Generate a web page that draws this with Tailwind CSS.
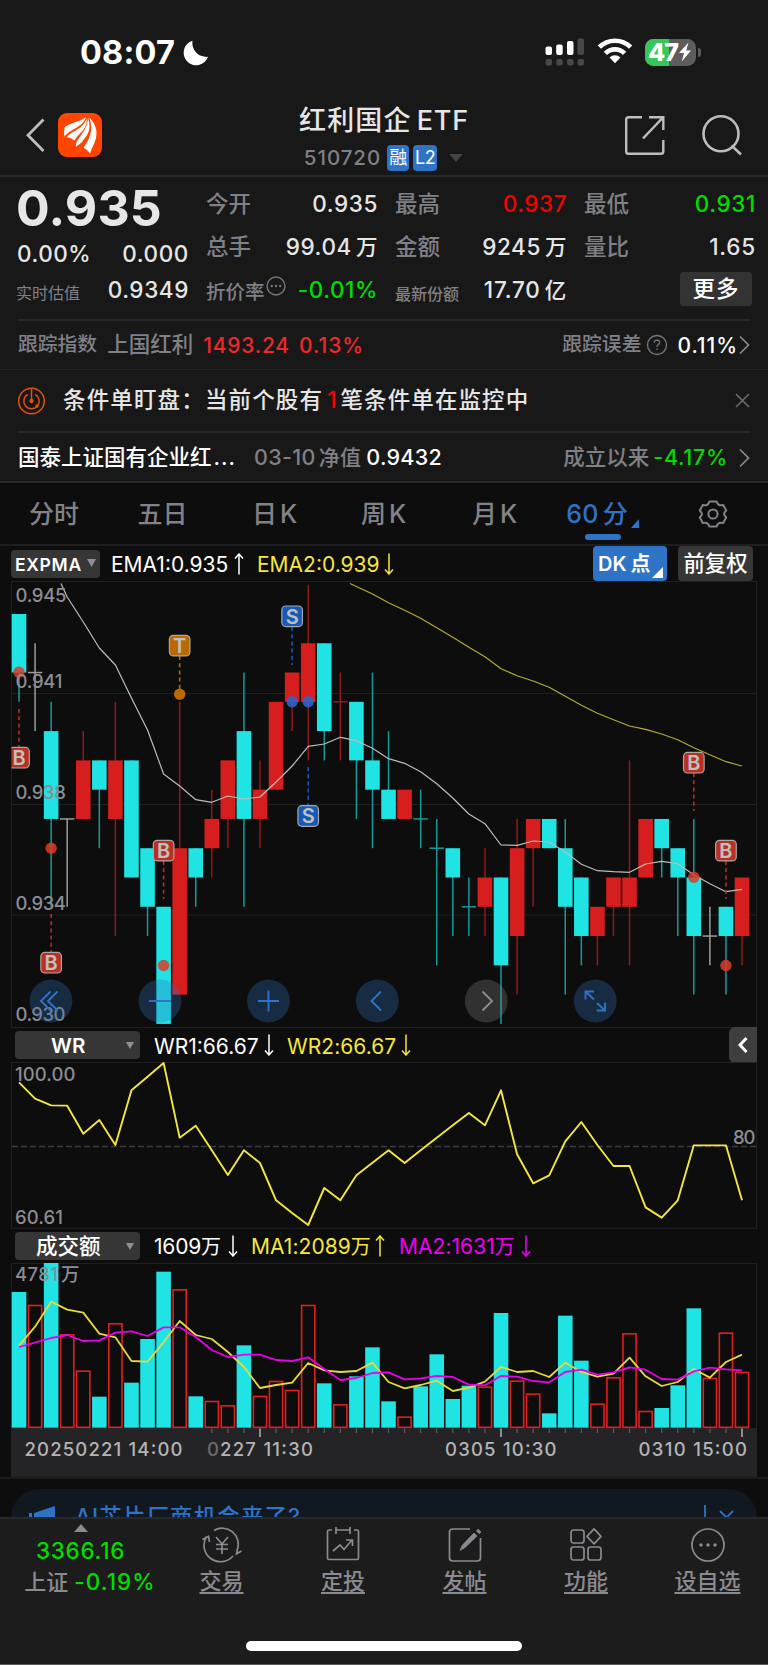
<!DOCTYPE html>
<html lang="zh-CN">
<head>
<meta charset="utf-8">
<title>红利国企ETF 510720</title>
<script src="https://cdn.jsdelivr.net/npm/@tailwindcss/browser@4"></script>
</head>
<body class="w-[768px] h-[1665px] overflow-hidden bg-[#0d0d0d] text-[#e6e6e6] font-['Inter','Noto_Sans_CJK_SC',sans-serif] leading-none whitespace-nowrap flex flex-col">

<div class="bg-[#181818] h-[483px] shrink-0 flex flex-col border-b-2 border-[#29292b]">
  <!-- status bar -->
  <div class="h-[88px] shrink-0 flex items-start justify-between pl-[80px] pr-[67px] pt-[36px] text-white">
    <div class="flex items-center gap-[8px] h-[32px]">
      <span class="text-[32.500px] font-bold tracking-[0.200px] mt-[2px]">08:07</span>
      <svg width="26" height="26" viewBox="0 0 26 26" class="mt-px"><path d="M9.500 .8A12.500 12.500 0 1 0 25 16.800 14 14 0 0 1 9.500 .8Z" fill="#fff"/></svg>
    </div>
    <div class="flex items-center h-[32px]">
      <svg width="40" height="28" viewBox="0 0 40 28"><g fill="#fff"><rect x="0.5" y="8.5" width="6.5" height="8.5" rx="2"/><rect x="11.2" y="6.5" width="6.5" height="10.5" rx="2"/><rect x="22" y="3" width="6.5" height="14" rx="2"/></g><g fill="#484848"><rect x="32.5" y="0.5" width="6.5" height="16.5" rx="2"/><rect x="0.5" y="21" width="6.5" height="6.5" rx="2"/><rect x="11.2" y="21" width="6.5" height="6.5" rx="2"/><rect x="22" y="21" width="6.5" height="6.5" rx="2"/><rect x="32.5" y="21" width="6.5" height="6.5" rx="2"/></g></svg>
      <svg width="36" height="26" viewBox="0 0 36 26" class="ml-[12px] -mt-[2px]"><g fill="none" stroke="#fff" stroke-width="4.6"><path d="M2.4 9.2A22 22 0 0 1 33.6 9.2"/><path d="M8.4 15.4A13.5 13.5 0 0 1 27.6 15.4"/></g><path d="M12.5 19.5A8 8 0 0 1 23.5 19.5L18 25.2Z" fill="#fff"/></svg>
      <div class="ml-[12px] relative w-[51px] h-[27px] rounded-[8.5px] overflow-hidden bg-[#5d5d5d]">
        <div class="absolute inset-y-0 left-0 w-[24px] bg-[#35c759]"></div>
        <div class="absolute inset-0 flex items-center pl-[3px]"><span class="text-[25px] font-extrabold tracking-[-1px] text-white">47</span>
        <svg width="14" height="22" viewBox="0 0 14 19" class="shrink-0"><path d="M10.5 0 1 10.4H6L3.8 19 13 8H8.2Z" fill="#fff"/></svg></div>
      </div>
      <div class="ml-[2px] w-[3px] h-[9px] rounded-r-[3px] bg-[#5d5d5d]"></div>
    </div>
  </div>
  <!-- title bar -->
  <div class="h-[89px] shrink-0 flex border-b-2 border-[#29292b]">
    <div class="w-[280px] flex items-start pt-[25px] pl-[25px]">
      <svg width="21" height="44" viewBox="0 0 21 44"><path d="M18.5 6.5 3 22.2 18.5 38" fill="none" stroke="#bdbdbd" stroke-width="2.8"/></svg>
      <svg width="44" height="44" viewBox="0 0 44 44" class="ml-[12px]"><rect width="44" height="44" rx="9" fill="#ff4500"/><g fill="#fff"><path d="M6.500 23.500Q5.500 17 7 13.800C12 10 20 9.500 28 4.200 24.500 15 13 15 6.500 23.500Z"/><path d="M8.500 24.500C12 18.500 24 17.500 28.800 5.500 29.500 17 20.500 20 16.500 27.500 13 25 11 24.500 8.500 24.500Z"/><path d="M18 34C17 25 29 20.500 30 5 34.500 18 28 23.500 24 29 21.500 31 19.500 32.500 18 34Z"/><path d="M31.300 4.500C36 9 38.500 15 38.500 20 38.500 28 34.500 33 32 40.500 30.500 38 28 36.500 25.500 34.500 31 27 36 18 31.300 4.500Z"/></g></svg>
    </div>
    <div class="w-[208px] flex flex-col items-center">
      <div class="flex items-center pt-[18px] h-[46px] text-[27px] font-medium"><span class="tracking-[1.2px]">红利国企</span><span class="ml-[5px] tracking-[0.8px]">ETF</span></div>
      <div class="flex items-center mt-[11px] h-[26px] pr-px"><span class="text-[20.500px] font-medium text-[#808087] tracking-[0.95px]">510720</span>
        <span class="ml-[6px] w-[22px] h-[26px] rounded-[4px] bg-[#2e73c5] text-white text-[18px] flex items-center justify-center">融</span>
        <span class="ml-[4px] w-[24px] h-[26px] rounded-[4px] bg-[#2e73c5] text-white text-[18px] flex items-center justify-center tracking-[-0.4px]">L2</span>
        <svg width="14" height="8" viewBox="0 0 14 8" class="ml-[12px]"><path d="M0 0H14L7 8Z" fill="#444"/></svg></div>
    </div>
    <div class="flex-1 flex items-start pt-[26px] justify-end pr-[25px] gap-[35px]">
      <svg width="42" height="44" viewBox="0 0 42 44" fill="none" stroke="#bdbdbd" stroke-width="2.4"><path d="M18 3.200H4.500Q2.200 3.200 2.200 5.500V37.500Q2.200 39.800 4.500 39.800H37Q39.300 39.800 39.300 37.500V26"/><path d="M25 3.200H39.300V16M39.300 3.200 19 24.500"/></svg>
      <svg width="42" height="44" viewBox="0 0 42 44" fill="none" stroke="#bdbdbd" stroke-width="2.6"><circle cx="20" cy="19.800" r="17.500"/><path d="M30.500 31.500 40 40.500"/></svg>
    </div>
  </div>
  <!-- quote panel -->
  <div class="h-[144px] shrink-0 mx-[18px] border-b-2 border-[#262628] flex">
    <div class="w-[171px] shrink-0 flex flex-col">
      <div class="text-[50px] font-bold h-[62px] pt-[6px] tracking-[0.2px] -ml-[2px]">0.935</div>
      <div class="h-[36px] flex justify-between text-[22.500px] font-medium pt-[4px] -ml-px"><span class="tracking-[0.500px]">0.00%</span><span class="tracking-[0.6px]">0.000</span></div>
      <div class="flex justify-between items-end h-[28px] -ml-[2px]"><span class="text-[16px] text-[#808087] pb-[2px]">实时估值</span><span class="text-[22.500px] font-medium tracking-[0.6px] pb-[2px]">0.9349</span></div>
    </div>
    <div class="ml-[17px] w-[172px] shrink-0 pt-[6px] text-[22.500px] font-medium">
      <div class="h-[43px] flex items-center justify-between"><span class="text-[#808087]">今开</span><span class="tracking-[0.6px]">0.935</span></div>
      <div class="h-[43px] flex items-center justify-between"><span class="text-[#808087]">总手</span><span class="tracking-[0.6px]">99.04<span class="ml-[4px] text-[21.500px]">万</span></span></div>
      <div class="h-[43px] flex items-center justify-between"><span class="flex items-center"><span class="text-[#808087] text-[19.500px] mt-[5px]">折价率</span><svg width="20" height="20" viewBox="0 0 20 20" class="ml-px -mt-[9px]"><circle cx="10" cy="10" r="9" fill="none" stroke="#77777d" stroke-width="1.400"/><g fill="#77777d"><circle cx="5.800" cy="10" r="1.200"/><circle cx="10" cy="10" r="1.200"/><circle cx="14.200" cy="10" r="1.200"/></g></svg></span><span class="text-[#00dc00] tracking-[0.600px]">-0.01%</span></div>
    </div>
    <div class="ml-[17px] w-[172px] shrink-0 pt-[6px] text-[22.500px] font-medium">
      <div class="h-[43px] flex items-center justify-between"><span class="text-[#808087]">最高</span><span class="tracking-[0.5px] text-[#f50000]">0.937</span></div>
      <div class="h-[43px] flex items-center justify-between"><span class="text-[#808087]">金额</span><span class="tracking-[0.6px]">9245<span class="ml-[4px] text-[21.500px]">万</span></span></div>
      <div class="h-[43px] flex items-center justify-between"><span class="text-[#808087] text-[16px] mt-[6px]">最新份额</span><span class="tracking-[0.8px]">17.70<span class="ml-[4px] text-[21.500px]">亿</span></span></div>
    </div>
    <div class="ml-[17px] w-[172px] shrink-0 pt-[6px] text-[22.500px] font-medium">
      <div class="h-[43px] flex items-center justify-between"><span class="text-[#808087]">最低</span><span class="tracking-[0.6px] text-[#00dc00]">0.931</span></div>
      <div class="h-[43px] flex items-center justify-between"><span class="text-[#808087]">量比</span><span class="tracking-[0.8px]">1.65</span></div>
      <div class="h-[43px] flex items-center justify-end pr-[4px]"><span class="w-[72px] h-[34px] -mt-[3px] rounded-[4px] bg-[#333334] flex items-center justify-center text-white tracking-[1px]">更多</span></div>
    </div>
  </div>
  <!-- tracked index -->
  <div class="h-[49px] shrink-0 px-[18px] flex items-center border-b border-[#262628] text-[21px] font-medium">
    <span class="text-[19.800px] text-[#808087]">跟踪指数</span><span class="ml-[10px] text-[21.500px] text-[#808087]">上国红利</span>
    <span class="ml-[10px] text-[#f02828] tracking-[0.8px]">1493.24</span><span class="ml-[9px] text-[#f02828] tracking-[1px]">0.13%</span>
    <span class="ml-auto text-[19.800px] text-[#808087]">跟踪误差</span>
    <svg width="22" height="22" viewBox="0 0 22 22" class="ml-[5px]"><circle cx="11" cy="11" r="9.500" fill="none" stroke="#77777d" stroke-width="1.300"/><path d="M8.200 8.800Q8.400 6.200 11 6.200 13.700 6.300 13.600 8.600 13.500 9.800 12 10.700 11 11.400 11 13M11 14.500V16" fill="none" stroke="#77777d" stroke-width="1.300"/></svg>
    <span class="ml-[9px] text-white tracking-[0.950px]">0.11%</span>
    <svg width="11" height="20" viewBox="0 0 11 20" class="ml-px"><path d="M1 1.500 9.500 10 1 18.500" fill="none" stroke="#8c8c8c" stroke-width="1.700"/></svg>
  </div>
  <!-- conditional order notice -->
  <div class="h-[63px] shrink-0 mx-[18px] flex items-center border-b-2 border-[#262628] text-[22.500px] font-medium">
    <svg width="28" height="28" viewBox="0 0 28 28" fill="none" stroke="#e0530c" stroke-width="1.500"><circle cx="13.500" cy="14" r="12.800"/><path d="M13.500 1V14M9.800 7.300A7.700 7.700 0 1 0 17.200 7.300"/><circle cx="13.500" cy="14" r="1.400" fill="#e0530c"/><circle cx="19" cy="19" r="1" fill="#e0530c"/></svg>
    <span class="ml-[17px] tracking-[1.150px]">条件单盯盘：当前个股有</span><span class="ml-[4px] text-[#f50000]">1</span><span class="ml-[4px] tracking-[1.100px]">笔条件单在监控中</span>
    <svg width="15" height="15" viewBox="0 0 15 15" class="ml-auto"><path d="M1 1 14 14M14 1 1 14" stroke="#6f6f73" stroke-width="1.500"/></svg>
  </div>
  <!-- fund row -->
  <div class="flex-1 px-[18px] pt-px flex items-center text-[21.500px] font-medium">
    <span class="text-white">国泰上证国有企业红<span class="tracking-[1px] ml-[2px]">...</span></span>
    <span class="ml-[18px] text-[#808087] tracking-[0.3px]">03-10<span class="ml-[3px] text-[21px]">净值</span></span>
    <span class="ml-[5px] text-white tracking-[0.300px]">0.9432</span>
    <span class="ml-auto text-[#808087] text-[21.500px]">成立以来</span><span class="ml-[4px] text-[#00dc00] tracking-[0.700px]">-4.17%</span>
    <svg width="11" height="20" viewBox="0 0 11 20" class="ml-[11px]"><path d="M1 1.500 9.500 10 1 18.500" fill="none" stroke="#8c8c8c" stroke-width="1.700"/></svg>
  </div>
</div>

<!-- period tabs -->
<div class="h-[63px] shrink-0 border-b-2 border-[#1e1e20] flex items-center text-[25px] text-[#828288] font-medium">
  <div class="w-[108px] pt-[2px] flex justify-center">分时</div>
  <div class="w-[109px] pt-[2px] flex justify-center">五日</div>
  <div class="w-[115px] pt-[2px] flex justify-center gap-[3px]">日<span>K</span></div>
  <div class="w-[103px] pt-[2px] flex justify-center gap-[3px]">周<span>K</span></div>
  <div class="w-[119px] pt-[2px] flex justify-center gap-[3px]">月<span>K</span></div>
  <div class="w-[97px] h-full relative flex items-center justify-center pt-[2px] text-[#2e73c5]"><span class="tracking-[0.400px]">60</span><span class="ml-[4px]">分</span>
    <svg width="8" height="9" viewBox="0 0 8 9" class="ml-[3px] mt-[17px]"><path d="M8 0V9H0Z" fill="#2e73c5"/></svg>
    <div class="absolute left-[31px] bottom-[4px] w-[36px] h-[6px] rounded-[3px] bg-[#2e73c5]"></div></div>
  <div class="flex-1 flex justify-center"><svg width="30" height="30" viewBox="0 0 30 30" fill="none" stroke="#828288" stroke-width="2" class="ml-[7px]"><path stroke-linejoin="round" d="M11.500 2.500H18.500Q19.800 5.500 21.200 6 22.500 6.500 25.200 6L28.200 11.500Q26 13.800 26 15 26 16.200 28.200 18.500L25.200 24Q22.500 23.500 21.200 24 19.800 24.500 18.500 27.500H11.500Q10.200 24.500 8.800 24 7.500 23.500 4.800 24L1.800 18.500Q4 16.200 4 15 4 13.800 1.800 11.500L4.800 6Q7.500 6.500 8.800 6 10.200 5.500 11.500 2.500Z"/><circle cx="15" cy="15" r="4.600"/></svg></div>
</div>

<!-- EXPMA legend -->
<div class="h-[35px] shrink-0 pl-[11px] pr-[15px] flex items-center text-[21px]">
  <div class="w-[89px] h-[28px] rounded-[4px] bg-[#363637] flex items-center justify-between pl-[4px] pr-[4px] pt-[2px] text-white font-semibold text-[17.500px] tracking-[0.7px]">EXPMA<svg width="9" height="8" viewBox="0 0 9 8" class="-mt-[3px]"><path d="M0 0H9L4.500 8Z" fill="#8f8f94"/></svg></div>
  <span class="ml-[11px] w-[118px] pt-[2px]"><span class="text-white">EMA1:0.935</span></span>
  <svg width="10" height="22" viewBox="0 0 10 22" class="ml-[5px] shrink-0"><path d="M5 21.500V1M1 5.500 5 1 9 5.500" fill="none" stroke="#fff" stroke-width="1.500"/></svg>
  <span class="ml-[13px] pt-[2px] w-[122px] text-[#f5e642]">EMA2:0.939</span>
  <svg width="10" height="22" viewBox="0 0 10 22" class="ml-[5px] shrink-0"><path d="M5 .5V21M1 16.500 5 21 9 16.500" fill="none" stroke="#f5e642" stroke-width="1.500"/></svg>
  <div class="ml-auto w-[74px] h-[35px] rounded-[4px] bg-[#2e73c5] flex items-center pl-[5px] text-white font-semibold text-[20px] relative">DK<span class="ml-[4px]">点</span><svg width="11" height="11" viewBox="0 0 11 11" class="absolute right-[4px] bottom-[3px]"><path d="M11 0V11H0Z" fill="#fff"/></svg></div>
  <div class="ml-[11px] w-[75px] h-[35px] rounded-[4px] bg-[#363637] flex items-center justify-center text-white font-medium text-[21.300px]">前复权</div>
</div>

<!-- candlestick chart -->
<svg id="kline" class="shrink-0 block" width="768" height="447" viewBox="0 581 768 447"></svg>

<!-- WR legend -->
<div class="h-[34px] shrink-0 pl-[15px] pr-[11px] flex items-center text-[21px]">
  <div class="w-[125px] h-[28px] rounded-[4px] bg-[#363637] flex items-center pl-[36px] pr-[6px] pt-[2px] text-white font-semibold text-[20.500px]">WR<svg width="8" height="7" viewBox="0 0 8 7" class="ml-auto -mt-[2px]"><path d="M0 0H8L4 7Z" fill="#8f8f94"/></svg></div>
  <span class="ml-[14px] pt-[2px] w-[106px] text-white">WR1:66.67</span>
  <svg width="10" height="22" viewBox="0 0 10 22" class="ml-[4px] shrink-0"><path d="M5 .5V21M1 16.500 5 21 9 16.500" fill="none" stroke="#fff" stroke-width="1.500"/></svg>
  <span class="ml-[13px] pt-[2px] w-[110px] text-[#f5e642] tracking-[0.050px]">WR2:66.67</span>
  <svg width="10" height="22" viewBox="0 0 10 22" class="ml-[4px] shrink-0"><path d="M5 .5V21M1 16.500 5 21 9 16.500" fill="none" stroke="#f5e642" stroke-width="1.500"/></svg>
  <div class="ml-auto w-[28px] h-[36px] rounded-l-[6px] bg-[#3e3e3f] flex items-center justify-center"><svg width="10" height="18" viewBox="0 0 10 18"><path d="M8.500 2 2 9 8.500 16" fill="none" stroke="#fff" stroke-width="3"/></svg></div>
</div>
<svg id="wr" class="shrink-0 block" width="768" height="167" viewBox="0 1062 768 167"></svg>

<!-- turnover legend -->
<div class="h-[34px] shrink-0 pl-[15px] flex items-center text-[21px]">
  <div class="w-[125px] h-[28px] rounded-[4px] bg-[#363637] flex items-center pl-[21px] pr-[6px] pt-px text-white font-medium text-[21.500px]">成交额<svg width="8" height="7" viewBox="0 0 8 7" class="ml-auto"><path d="M0 0H8L4 7Z" fill="#8f8f94"/></svg></div>
  <span class="ml-[14px] w-[70px] pt-px text-white tracking-[-0.200px]">1609<span class="text-[20px]">万</span></span>
  <svg width="10" height="22" viewBox="0 0 10 22" class="ml-[4px] shrink-0"><path d="M5 .5V21M1 16.500 5 21 9 16.500" fill="none" stroke="#fff" stroke-width="1.500"/></svg>
  <span class="ml-[13px] w-[120px] pt-px text-[#f5e642] tracking-[0.050px]">MA1:2089<span class="text-[20px]">万</span></span>
  <svg width="10" height="22" viewBox="0 0 10 22" class="ml-[4px] shrink-0"><path d="M5 21.500V1M1 5.500 5 1 9 5.500" fill="none" stroke="#f5e642" stroke-width="1.500"/></svg>
  <span class="ml-[14px] w-[117px] pt-px text-[#f000f0] tracking-[0.050px]">MA2:1631<span class="text-[20px]">万</span></span>
  <svg width="10" height="22" viewBox="0 0 10 22" class="ml-[5px] shrink-0"><path d="M5 .5V21M1 16.500 5 21 9 16.500" fill="none" stroke="#f000f0" stroke-width="1.500"/></svg>
</div>
<svg id="vol" class="shrink-0 block" width="768" height="214" viewBox="0 1263 768 214"></svg>

<!-- promo strip, cut off by the bottom bar -->
<div class="h-[40px] shrink-0 border-t-2 border-[#1c1c1e] px-[11px] pt-[10px] overflow-hidden">
  <div class="h-[60px] rounded-t-[28px] bg-[#111820] pl-[17px] pr-[22px] flex items-start text-[#2e73c5]">
    <svg width="28" height="30" viewBox="0 0 28 30" class="mt-[17px]"><path d="M6 7 27 0V24L6 20ZM1 7H4V18H1Z" fill="#2e73c5"/></svg>
    <span class="ml-[19px] mt-[17px] text-[22.500px] font-medium tracking-[1.100px]">AI芯片厂商机会来了?</span>
    <svg width="32" height="30" viewBox="0 0 32 30" class="ml-auto mt-[15px]" fill="none" stroke="#2e73c5" stroke-width="1.800"><path d="M2 1V28M17 7 30 20M30 7 17 20"/></svg>
  </div>
</div>

<!-- bottom bar -->
<div class="h-[148px] shrink-0 bg-[#1c1c1c] border-t-2 border-[#29292b] flex flex-col">
  <div class="h-[98px] flex text-[22px] font-medium text-[#8a8a90]">
    <div class="w-[161px] pt-[5px] flex flex-col items-center">
      <svg width="14" height="8" viewBox="0 0 14 8"><path d="M0 8H14L7 0Z" fill="#8a8a90"/></svg>
      <span class="mt-[8px] text-[#00dc00] text-[22.500px] tracking-[0.700px]">3366.16</span>
      <div class="mt-[8px] pl-[19px] flex items-center"><span>上证</span><span class="ml-[6px] text-[#00dc00] text-[22.500px] tracking-[1.100px]">-0.19%</span></div>
    </div>
    <div class="w-[121px] pt-[8px] flex flex-col items-center"><svg width="40" height="36" viewBox="0 0 40 36" fill="none" stroke="#8a8a90" stroke-width="1.700"><path d="M12 3.500A16 16 0 0 1 35.500 22M31 29A16.500 16.500 0 0 1 4.500 9.500M.5 12.500 6.500 9.200 7.500 15M39.500 24 34.500 26.800 35.500 21.500"/><path d="M14 10 20 17 26 10M20 17V27M14 17.500H26M14 22H26"/></svg><span class="mt-[7px] underline underline-offset-[3px] decoration-2">交易</span></div>
    <div class="w-[122px] pt-[8px] flex flex-col items-center"><svg width="36" height="36" viewBox="0 0 36 36" fill="none" stroke="#8a8a90" stroke-width="1.700"><path d="M7 3H4Q2.500 3 2.500 4.500V31Q2.500 32.500 4 32.500H32Q33.500 32.500 33.500 31V4.500Q33.500 3 32 3H29M11 3H25M11 0V7M25 0V7"/><path d="M8 24 15 18 19 22.500 27 13M21 13H27.500V19"/></svg><span class="mt-[7px] underline underline-offset-[3px] decoration-2">定投</span></div>
    <div class="w-[121px] pt-[8px] flex flex-col items-center"><svg width="36" height="36" viewBox="0 0 36 36" fill="none" stroke="#8a8a90" stroke-width="1.700"><path d="M23 2H6Q2.500 2 2.500 5V31Q2.500 34 6 34H30Q33.500 34 33.500 31V11"/><path d="M13 23.500 15.500 18 27 6 30 9 18 20.500ZM29.500 4 31 2.200 34 5 32.200 6.700Z" fill="#8a8a90" stroke-width=".8"/></svg><span class="mt-[7px] underline underline-offset-[3px] decoration-2">发帖</span></div>
    <div class="w-[122px] pt-[8px] flex flex-col items-center"><svg width="36" height="36" viewBox="0 0 36 36" fill="none" stroke="#8a8a90" stroke-width="1.700"><rect x="3" y="3" width="13" height="13" rx="2.500"/><rect x="3" y="20" width="13" height="13" rx="2.500"/><rect x="20" y="20" width="13" height="13" rx="2.500"/><path d="M26 1.800 33 9.300 26 16.800 19 9.300Z" stroke-linejoin="round"/></svg><span class="mt-[7px] underline underline-offset-[3px] decoration-2">功能</span></div>
    <div class="w-[121px] pt-[8px] flex flex-col items-center"><svg width="36" height="36" viewBox="0 0 36 36" fill="none" stroke="#8a8a90" stroke-width="1.700"><circle cx="18" cy="18" r="16"/><g fill="#8a8a90" stroke="none"><circle cx="11" cy="18" r="1.800"/><circle cx="18" cy="18" r="1.800"/><circle cx="25" cy="18" r="1.800"/></g></svg><span class="mt-[7px] underline underline-offset-[3px] decoration-2">设自选</span></div>
  </div>
  <div class="mt-[24px] ml-[246px] w-[276px] h-[10px] rounded-full bg-white"></div>
  <div class="mt-auto h-px bg-[#5a5a5a]"></div>
</div>

<script>
const CY='#20e3e3', RD='#d61e1e', WH='#9c9c9c', YE='#f5e642';
const X=i=>19+16.067*i;
const L=k=>584.7+29.28*k;
const rect=(x,y,w,h,f,e='')=>`<rect x="${x}" y="${y}" width="${w}" height="${h}" fill="${f}" ${e}/>`;
const line=(a,b,c,d,s,w=1,e='')=>`<line x1="${a}" y1="${b}" x2="${c}" y2="${d}" stroke="${s}" stroke-width="${w}" ${e}/>`;
const poly=(p,s,w)=>`<polyline points="${p.map(q=>q.join()).join(' ')}" fill="none" stroke="${s}" stroke-width="${w}" stroke-linejoin="round"/>`;
const label=(t,x,y,w,f='#8c8c93',e='')=>`<text x="${x}" y="${y}" textLength="${w}" font-size="18.5" font-weight="500" fill="${f}" ${e}>${t}</text>`;
const G='#202022';

// [type, body top, body bottom, high, low] in price steps below 0.945
const K=[['c',1,3,1,4],['w',3,3,2,5],['c',5,8,4,11],['w',8,8,8,11],['r',6,8,5,8],['c',6,7,6,9],['r',6,8,4,12],['c',6,10,6,10],['c',9,11,9,12],['c',11,15,11,15],['r',9,14,4,14],['c',9,10,9,11],['r',8,9,7,10],['r',6,8,6,9],['c',5,8,3,11],['r',7,8,6,9],['r',4,7,4,7],['r',3,4,3,5],['r',2,4,0,6],['c',2,5,2,6],['r',4,4,3,6],['c',4,6,4,8],['c',6,7,3,9],['c',7,8,5,8],['r',7,8,7,8],['c',8,8,7,9],['c',9,9,8,13],['c',9,10,9,12],['c',11,11,10,12],['r',10,11,9,12],['c',10,13,10,15],['r',9,12,8,14],['r',8,9,8,11],['c',8,9,8,9],['c',9,11,8,14],['c',10,12,10,13],['r',11,12,11,13],['r',10,11,10,12],['r',10,11,6,13],['r',8,10,8,10],['c',8,9,8,10],['c',9,10,9,12],['c',10,12,8,14],['w',12,12,11,13],['c',11,12,11,14],['r',10,12,10,13]];
let s='';
[581.5,693.5,804.5,915,1027.5].forEach(y=>s+=line(11,y,757,y,G));
s+=line(11.5,581,11.5,1028,G)+line(756.5,581,756.5,1028,G);
K.forEach(([t,a,b,h,l],i)=>{
  const col=t=='c'?CY:t=='r'?RD:WH, wick=t=='c'?'#189a9a':t=='r'?'#8f1a1a':WH, x=X(i);
  if(h!=l) s+=line(x,L(h),x,L(l),wick,1.5);
  s+= a==b ? line(x-7.2,L(a),x+7.2,L(a),wick,1.5) : rect(x-7.3,L(a),14.6,L(b)-L(a),col);
});
const E1=[597,622,648,665,698,730,774,786,799.7,802.3,796,799,797,782,766,746.300,744,737.3,740.700,748.3,758.700,763.3,771.700,783.700,798,814,823.700,845,845.3,841,842,852,864.3,870.700,871.700,872.3,864,861.3,863.700,874.700,883.700,891.700,889.3];
s+=poly([[61,583.5],...E1.map((y,i)=>[X(i+3),y])],'#bcbcbc',1.200);
const E2=[594,602.700,610.3,618.3,627.700,637.3,647.3,656.700,668.700,675.700,681,687.3,696.3,705.3,713.3,719.700,726,729.3,734,739.700,747.700,754.700,761.700,766];
s+=poly([[350,583.5],...E2.map((y,i)=>[X(i+22),y])],'#b5aa35',1.200);
const mark=(i,t,cy,y1,y2,dot,f,d)=>{const x=X(i);
  return line(x,y1,x,y2,f,1.600,'stroke-dasharray="4 3.2"')+`<circle cx="${x}" cy="${dot}" r="5.700" fill="${d}" fill-opacity=".85"/>`+
  rect(x-10.3,cy-10.3,20.6,20.6,f,'rx="4" stroke="#a8a8a8" stroke-width="1.200"')+`<text x="${x}" y="${cy+7.2}" font-size="20" font-weight="600" text-anchor="middle" fill="#c0c0c0">${t}</text>`;};
s+='<clipPath id="plot"><rect x="11.5" y="581" width="746" height="447"/></clipPath><g clip-path="url(#plot)">';
const MR='#b93022', MB='#1659b8', MO='#ba6a00', DR='#dc3c28', DB='#2a68d4';
s+=mark(0,'B',757.700,709,747,672.3,MR,DR)+mark(2,'B',962.700,914,952,848.2,MR,DR)+mark(9,'B',850.600,861,899,965.500,MR,DR)+mark(10,'T',645.600,656,690,694.3,MO,'#d67b00')+mark(17,'S',616.3,627,665,701.700,MB,DB)+mark(18,'S',816,767,806,701.700,MB,DB)+mark(42,'B',762.700,773,811,877.3,MR,DR)+mark(44,'B',850.600,861,899,965.500,MR,DR);
s+='</g>';
[['0.945',601.500,51],['0.941',688,47],['0.938',799,50.500],['0.934',910,50.500],['0.930',1021,50]].forEach(([t,y,w])=>s+=label(t,15.5,y,w));
const ic=['M50.500 991.500 41 1001 50.500 1010.500M57.500 991.500 48 1001 57.500 1010.500','M149 1001H171','M258 1001H279M268.500 990.500V1011.500','M381 991.500 371.500 1001 381 1010.500','M482.500 991.500 492 1001 482.500 1010.500','M594 999.500 585.500 991.500M585.500 999.500V991.500H594M597 1003 605 1010.500M605 1002.500V1010.500H596.500'];
[51,160,268.500,377.3,486.3,595.3].forEach((x,i)=>{const g=i==4;s+=`<circle cx="${x}" cy="1001" r="21.400" fill="${g?'#858585':'#3070be'}" fill-opacity=".31"/><path d="${ic[i]}" fill="none" stroke="${g?'#8d8d8d':'#2e73c5'}" stroke-width="1.900"/>`;});
document.getElementById('kline').innerHTML=s;

// Williams %R
s=line(11,1062.5,757,1062.5,G)+line(11,1228.3,757,1228.3,G)+line(11.5,1062,11.5,1229,G)+line(756.5,1062,756.5,1229,G);
s+=line(12,1146.500,757,1146.500,'#3c3c3e',1.300,'stroke-dasharray="6 3"');
s+=label('100.00',15,1081,60.500)+label('60.61',15,1224,48)+label('80',733,1143.500,22.500);
const W=[187,236,256,257,341,300,375,211,170,129,353,317,391,465,391,429,541,579,615,504,541,466,428,391,429,391,353,316,279,316,211,403,490,466,364,306,375,438,438,562,593,541,376,376,376,541];
s+=poly(W.map((v,i)=>[X(i),1020+v/3]),YE,1.900);
document.getElementById('wr').innerHTML=s;

// turnover
s=line(11,1263.5,757,1263.5,G)+line(11.5,1263,11.5,1428,G)+line(756.5,1263,756.5,1428,G)+rect(11,1428,746,49,'#242426');
const V='c201 r240 c114 r328 r437 c515 r295 c473 c342 c140 r193 c514 r528 r541 c361 r513 r468 r495 r240 c475 r538 c454 c367 c529 r575 c484 c388 c522 c482 r485 c264 r467 r506 c565 c272 c407 r536 r457 r325 r558 c549 c481 c250 r459 r323 r441'.split(' ');
V.forEach((v,i)=>{const y=1225+v.slice(1)/3,x=X(i);s+= v[0]=='c'?rect(x-7.3,y,14.6,1427.700-y,CY):rect(x-6.6,y+.5,13.2,1426.800-y,'none','stroke="#e02020" stroke-width="1.600"');});
s+=label('4781',15,1281,43)+label('万',61,1281,17);
const A=[362,305,230,254,263,326,337,408,410,352,288,330,342,381,426,489,480,473,414,436,441,438,413,471,490,480,467,498,488,470,426,441,438,456,413,441,455,446,398,454,483,471,432,458,411,389];
const B=[366,353,339,330,348,346,323,319,333,307,307,336,375,396,389,389,405,408,397,432,465,459,444,442,463,460,453,456,479,481,453,455,468,472,441,434,449,442,427,434,462,464,439,428,433,436];
s+=poly(A.map((v,i)=>[X(i),1225+v/3]),'#e6d93f',1.800)+poly(B.map((v,i)=>[X(i),1225+v/3]),'#e800e8',1.800);
for(let i=12;i<46;i++) s+=line(X(i),1428.5,X(i),i%15?1433:1437,i%15?'#5c5c5e':'#9a9a9c',i%15?1.200:1.800);
s+=label('20250221 14:00',24.500,1456,158,'#b4b4b6')+label('0',207,1456,12,'#6c6c6e')+label('227 11:30',220,1456,93,'#b4b4b6')+label('0305 10:30',445,1456,111.500,'#b4b4b6')+label('0310 15:00',638.500,1456,108.500,'#b4b4b6');
document.getElementById('vol').innerHTML=s;
</script>
</body>
</html>
